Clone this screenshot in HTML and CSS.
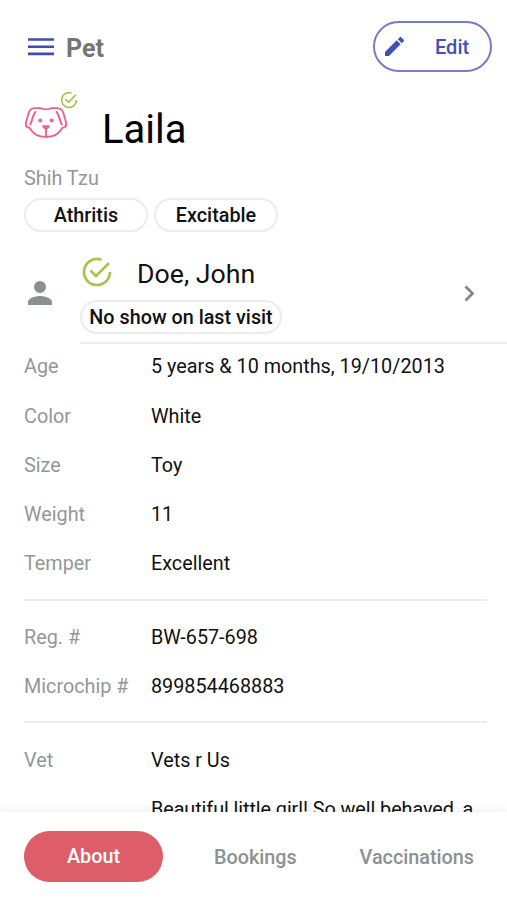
FILE: index.html
```html
<!DOCTYPE html>
<html lang="en">
<head>
<meta charset="utf-8">
<title>Pet</title>
<link rel="stylesheet" href="styles.css">
</head>
<body>
<div class="screen">
  <main class="content">
    <header class="topbar">
      <svg class="menu" viewBox="0 0 26 18"><path d="M0 1.5h26M0 8.700h26M0 15.900h26"/></svg>
      <h1 class="title">Pet</h1>
      <button class="edit">
        <svg class="pencil" viewBox="3 3 18 18"><path d="M3 17.250V21h3.750L17.810 9.940l-3.750-3.750L3 17.250zM20.710 7.040a1 1 0 0 0 0-1.410l-2.340-2.340a1 1 0 0 0-1.410 0l-1.830 1.830 3.750 3.750 1.830-1.830z"/></svg>
        <span class="edit-label">Edit</span>
      </button>
    </header>

    <section class="pet">
      <div class="avatar">
        <svg class="dog" viewBox="0 0 42 31">
          <path d="M11.500 1.300Q14.500.5 17 1.700Q21 3 25 1.700Q27.500.5 30.500 1.300C35 .6 37.500 2.500 38.500 6.500C39.300 10 40.800 13.500 41.200 16.500C41.400 19 40 20.500 37.500 20.800C34.500 26.500 28.500 30 21 30S7.500 26.500 4.500 20.800C2 20.500.6 19 .8 16.500C1.200 13.500 2.700 10 3.500 6.500C4.500 2.500 7 .6 11.500 1.300Z"/>
          <path class="ear" d="M10.500 5C8 7.500 7.500 13 5.200 17.500M31.500 5C34 7.500 34.500 13 36.800 17.500"/>
          <path d="M21 21v8.500"/>
          <circle cx="15.300" cy="13.500" r="2"/><circle cx="26.700" cy="13.500" r="2"/>
          <path class="nose" d="M18 18.200h6q1.600.4.700 1.800L22.300 22.400h-2.600L17.300 20q-.9-1.400.7-1.800z"/>
        </svg>
        <svg class="check badge" viewBox="0 0 28 28"><path d="M18.500 1.800A13 13 0 1 0 27 14M7.500 12.500l5.500 5.500L26 5"/></svg>
      </div>
      <h2 class="name">Laila</h2>
    </section>
    <p class="breed">Shih Tzu</p>
    <div class="chips"><span class="chip">Athritis</span><span class="chip">Excitable</span></div>

    <section class="owner">
      <svg class="person" viewBox="4 4 16 16"><path d="M12 12a4 4 0 1 0 0-8 4 4 0 0 0 0 8zm0 2c-2.670 0-8 1.340-8 4v2h16v-2c0-2.660-5.330-4-8-4z"/></svg>
      <div class="owner-body">
        <div class="owner-info">
          <div class="owner-line">
            <svg class="check" viewBox="0 0 28 28"><path d="M18.500 1.800A13 13 0 1 0 27 14M7.500 12.500l5.500 5.500L26 5"/></svg>
            <span class="owner-name">Doe, John</span>
          </div>
          <span class="chip note">No show on last visit</span>
        </div>
        <svg class="chevron" viewBox="0 0 11 17"><path d="M1.500 1.500l7 7-7 7"/></svg>
      </div>
    </section>

    <dl class="group">
      <div class="row"><dt>Age</dt><dd>5 years &amp; 10 months, 19/10/2013</dd></div>
      <div class="row"><dt>Color</dt><dd>White</dd></div>
      <div class="row"><dt>Size</dt><dd>Toy</dd></div>
      <div class="row"><dt>Weight</dt><dd>11</dd></div>
      <div class="row"><dt>Temper</dt><dd>Excellent</dd></div>
    </dl>
    <dl class="group">
      <div class="row"><dt>Reg. #</dt><dd>BW-657-698</dd></div>
      <div class="row"><dt>Microchip #</dt><dd>899854468883</dd></div>
    </dl>
    <dl class="group">
      <div class="row"><dt>Vet</dt><dd>Vets r Us</dd></div>
      <div class="row"><dt></dt><dd class="comment">Beautiful little girl! So well behaved, a</dd></div>
    </dl>
  </main>
  <nav class="tabs">
    <a class="tab active">About</a>
    <a class="tab">Bookings</a>
    <a class="tab">Vaccinations</a>
  </nav>
</div>
</body>
</html>
```
FILE: styles.css
```css
* { box-sizing: border-box; }
body, h1, h2, p, dl, dd { margin: 0; }
body { background: #fff; color: #111; font: 19.800px/24px Roboto, sans-serif; }
svg { display: block; flex: none; fill: none; overflow: visible; }

.screen { height: 900px; display: flex; flex-direction: column; overflow: hidden; }
.content { flex: 1; min-height: 0; overflow: hidden; white-space: nowrap; }

.topbar { display: flex; align-items: center; height: 51px; margin: 21px 15px 0 28px; }
.menu { width: 26px; height: 18px; stroke: #3f4db0; stroke-width: 2.6; }
.title { margin: 4px 0 0 12px; font-size: 25px; font-weight: 700; color: #757575; }
.edit { display: flex; align-items: center; width: 119px; height: 51px; margin-left: auto; padding: 1px 0 0 10px; border: 2px solid #777dc3; border-radius: 26px; background: #fff; color: #3f51b5; font: 500 20px/24px Roboto, sans-serif; }
.pencil { width: 19px; height: 19px; margin-top: -1px; fill: #3f51b5; }
.edit-label { margin-left: 31px; }

.pet { display: flex; height: 75px; margin: 20px 24px 0; }
.avatar { position: relative; width: 78px; padding: 15px 0 0 1px; }
.dog { width: 42px; height: 31px; stroke: #ec6590; stroke-width: 1.900; stroke-linejoin: round; stroke-linecap: round; }
.dog circle, .dog .nose { fill: #ec6590; stroke: none; }
.dog .ear { stroke-width: 2; }
.check { width: 28px; height: 28px; stroke: #a5c550; stroke-width: 2.700; }
.badge { position: absolute; left: 37px; top: 0; width: 16px; height: 16px; stroke-width: 3; }
.name { margin-top: 14px; font-size: 40px; line-height: 48px; font-weight: 400; color: #000; }
.breed { margin: 0 24px; color: #929898; }
.chips { display: flex; gap: 6px; margin: 7px 24px 0; }
.chip { display: flex; align-items: center; justify-content: center; width: 124px; height: 34px; padding-top: 2px; border: 2px solid #ececec; border-radius: 17px; font-weight: 500; }

.owner { display: flex; height: 112px; padding-left: 28px; }
.person { width: 24px; height: 24px; margin: 49px 28px 0 0; fill: #899090; }
.owner-body { flex: 1; display: flex; justify-content: space-between; padding-right: 32px; border-bottom: 2px solid #ececec; }
.owner-line { display: flex; align-items: center; height: 32px; margin-top: 26px; padding-left: 3px; }
.owner-line .check { margin-top: -5px; }
.owner-name { margin-left: 26px; font-size: 26.700px; line-height: 32px; }
.note { width: 202px; margin-top: 10px; padding-top: 1px; }
.chevron { width: 11px; height: 17px; margin-top: 53px; stroke: #858585; stroke-width: 2.700; }

.group { margin: 0 20px 0 24px; padding: 12px 0 10.200px; }
.group:first-of-type { padding-top: 0; margin-top: -2px; }
.group + .group { border-top: 2px solid #ececec; }
.row { display: grid; grid-template-columns: 127px 1fr; align-items: center; height: 49.300px; padding-top: 1.200px; }
dt { color: #929898; }
.comment { letter-spacing: -.07px; }

.tabs { position: relative; display: flex; align-items: center; height: 88px; padding: 3px 24px 0; background: #fff; box-shadow: 0 -2px 8px rgba(0,0,0,.07); color: #8a9292; font-weight: 500; }
.tab { flex: none; }
.active { width: 139px; height: 51px; margin: -2px 51px 0 0; border-radius: 26px; background: #dd5e68; color: #fff; line-height: 52px; text-align: center; }
.tab:last-child { margin-left: auto; margin-right: 9px; }
```
